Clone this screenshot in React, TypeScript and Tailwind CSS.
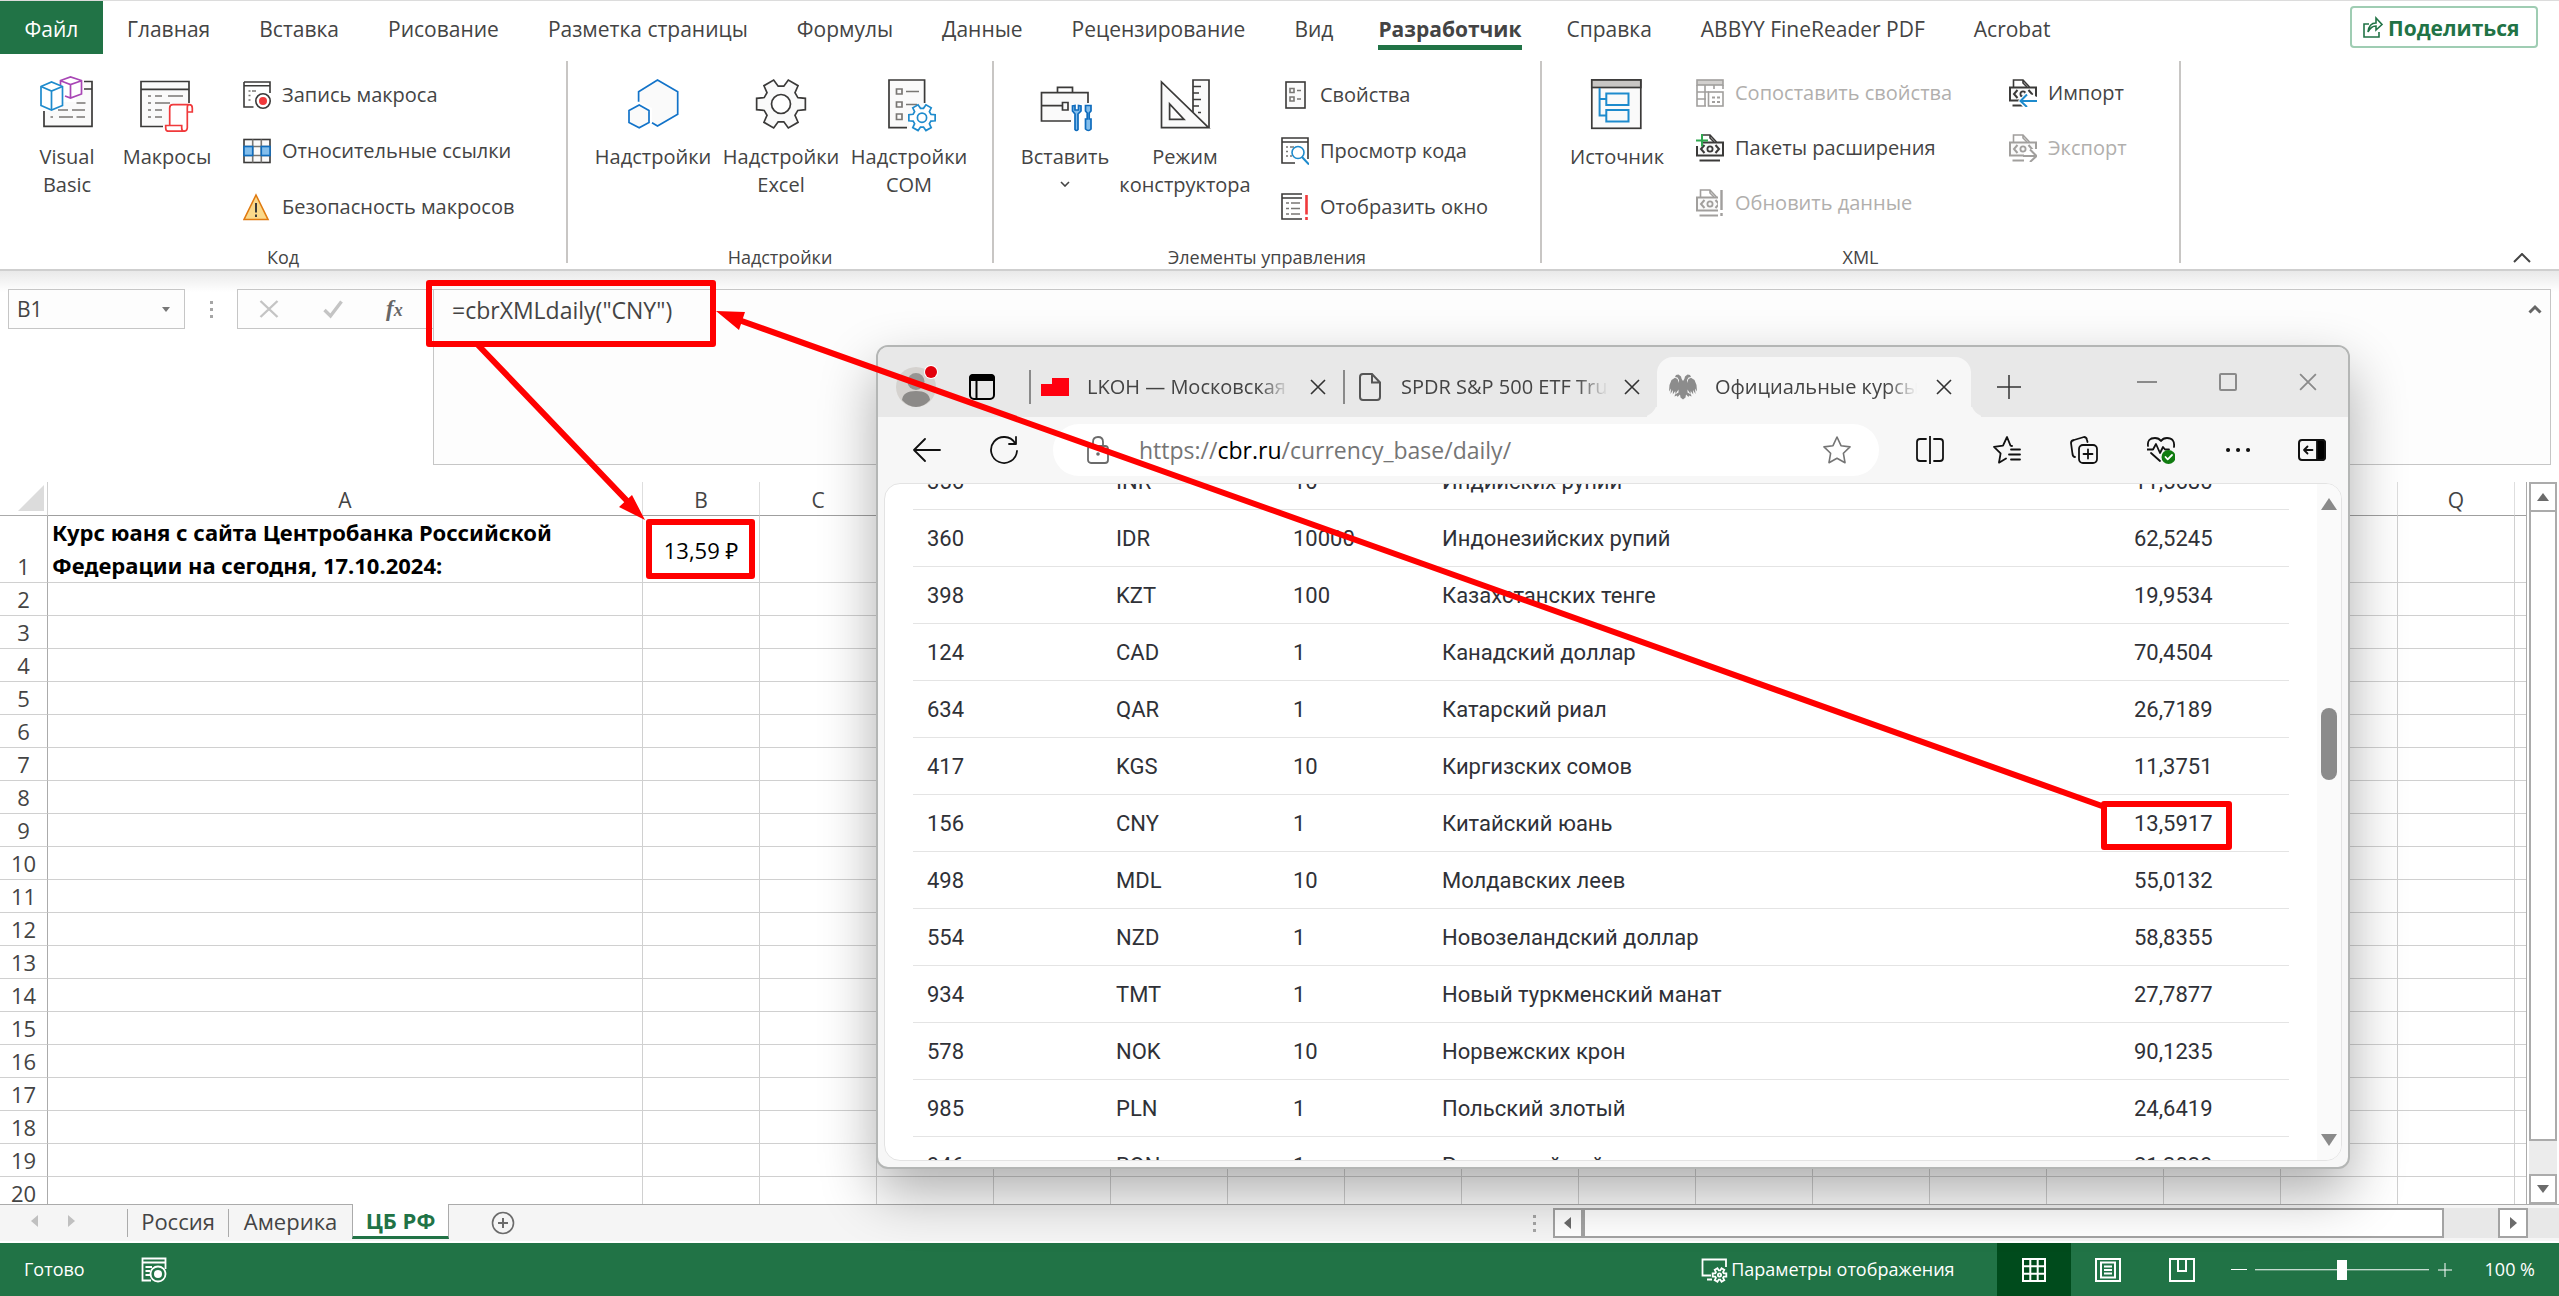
import React from "react";

const DARK = "#3b3a39";
const FILL = "#fafafa";

/* ---------- icon helpers ---------- */

function gearPath(cx: number, cy: number, outer: number, inner: number) {
  const pts: string[] = [];
  for (let i = 0; i < 6; i++) {
    const base = i * 60;
    const corners: [number, number][] = [
      [base - 21, inner],
      [base - 13, outer],
      [base + 13, outer],
      [base + 21, inner],
    ];
    for (const [deg, r] of corners) {
      const a = (deg * Math.PI) / 180;
      pts.push(`${(cx + r * Math.cos(a)).toFixed(2)} ${(cy + r * Math.sin(a)).toFixed(2)}`);
    }
  }
  return `M${pts.join("L")}Z`;
}

function Big({ children }: { children: React.ReactNode }) {
  return (
    <svg viewBox="0 0 54 56" className="w-[54px] h-14 shrink-0" fill="none" strokeWidth="1.7" aria-hidden="true">
      {children}
    </svg>
  );
}

function Small({ children }: { children: React.ReactNode }) {
  return (
    <svg viewBox="0 0 28 28" className="size-7 shrink-0" fill="none" strokeWidth="1.6" aria-hidden="true">
      {children}
    </svg>
  );
}

const VisualBasicIcon = () => (
  <Big>
    <path d="M4 35V50.3H52V5.5H36V26H22V35Z" fill={FILL} />
    <path d="M44 5.5H52V50.3H4V35M44 13H52" stroke={DARK} />
    <path d="M36.5 27H45.5M18 34H28M32 34H45M10.5 41H13M19 41H33M36.5 41H45" stroke="#797774" />
    <path d="M20 4.5L30.5 1L41.5 4.5V18L30.5 22L25 20V9Z" fill="#fff" />
    <path d="M20.5 9V4.5L30.5 1L41.5 4.5V18L30.5 22L25 20M20.5 4.8L30.5 8.6L41.5 4.8M30.5 8.6V22" stroke="#a846b5" />
    <path d="M1 10.5L11.5 6L22.5 10.5V29.5L11.5 34L1 29.5Z" fill="#fff" stroke="#1e8bcd" />
    <path d="M1 10.5L11.5 15L22.5 10.5M11.5 15V34" stroke="#1e8bcd" />
  </Big>
);

const MacrosIcon = () => (
  <Big>
    <path d="M1 5.5H49V27L29 29V48L23 50.5H1Z" fill={FILL} />
    <path d="M49 27V5.5H1V50.5H23M1 13.3H49" stroke={DARK} />
    <path d="M8 20H11M15 20H22M28 20H43M8 27H11M15 27H30M8 34H11M15 34H22M8 41H11M15 41H22" stroke="#797774" />
    <path
      d="M29.7 49.5V32Q29.7 28.7 33 28.7H49Q52.3 28.7 52.3 32V36H47.3V52Q47 55.2 44 55.2H28Q25.7 55.2 25.7 52V49.5H41.7V52Q41.7 55.2 44 55.2M47.3 36V32Q47.3 28.7 49 28.7"
      fill="#fff"
      stroke="#f0393b"
    />
  </Big>
);

const RecordIcon = () => (
  <Small>
    <path d="M1 1H27V12M1 1V26H10.5M1 4.8H27" stroke={DARK} />
    <path d="M5.5 10H7.5M9 10H13M5.5 14.5H7.5M5.5 19H7.5" stroke="#797774" />
    <circle cx="20" cy="20" r="7.2" stroke={DARK} fill="#fff" />
    <circle cx="20" cy="20" r="4" fill="#f0393b" />
  </Small>
);

const RelativeIcon = () => (
  <Small>
    <rect x="1" y="2.5" width="26" height="23" fill={FILL} stroke={DARK} />
    <path d="M9.7 2.5V25.5M18.3 2.5V25.5M1 9.5H27M1 18.5H27" stroke="#797774" />
    <rect x="1" y="9.5" width="8.7" height="9" fill="#83beec" stroke="#0f6cbd" />
    <rect x="18.3" y="9.5" width="8.7" height="9" fill="#83beec" stroke="#0f6cbd" />
  </Small>
);

const WarningIcon = () => (
  <Small>
    <path d="M13 2L25 26.5H1Z" fill="#fbd98a" stroke="#e07a10" />
    <path d="M13 10V19.5M13 21.5V24" stroke={DARK} strokeWidth="2" />
  </Small>
);

const AddinsIcon = () => (
  <Big>
    <path d="M12.6 26V15.7L31.5 4L51.7 15.7V38.3L31.5 50L26 46.7V32Z" fill={FILL} />
    <path d="M12.6 25.7V15.7L31.5 4L51.7 15.7V38.3L31.5 50L26 46.7" stroke="#1273c9" />
    <path d="M13.2 29L23 34.5V46.5L13.2 51.8L3 46.5V34.5Z" fill={FILL} stroke="#1273c9" />
  </Big>
);

const GearIcon = () => (
  <Big>
    <path d={gearPath(27, 28, 25, 18)} fill={FILL} stroke={DARK} />
    <circle cx="27" cy="28" r="9.5" fill="#fff" stroke={DARK} />
  </Big>
);

const ComIcon = () => (
  <Big>
    <path d="M7 4H42.6V30L27 42V51.7H7Z" fill={FILL} />
    <path d="M42.6 27V4H7V51.7H25" stroke={DARK} />
    <path d="M14.5 13H20V18H14.5ZM14.5 26H20V31H14.5ZM14.5 38H20V43.5H14.5ZM24 15.5H37M24 28.5H35" stroke="#797774" />
    <path d={gearPath(40, 41.7, 13.5, 9.5)} fill="#fff" stroke="#1e8bcd" />
    <circle cx="40" cy="41.7" r="4.6" stroke="#1e8bcd" />
  </Big>
);

const ToolboxIcon = () => (
  <Big>
    <path d="M3.5 16.7H50V28H34V45H3.5Z" fill={FILL} />
    <path d="M50 27V16.7H3.5V45H33M3.5 29.7H24M19.5 16.7V11.3H34.5V16.7M24.5 26.5H30V34H24.5Z" stroke={DARK} />
    <path d="M34.5 30V35L37 38V53.5Q38.4 55.5 40 53.5V38L43 35V30L40.5 29.5V34H37V29.5Z" fill="#83beec" stroke="#0f6cbd" />
    <path d="M47.5 29.5H53V35L51.2 37V43H53V53Q50.5 56 47.5 53V43H49.2V37L47.5 35Z" fill="#83beec" stroke="#0f6cbd" />
  </Big>
);

const DesignIcon = () => (
  <Big>
    <path d="M35 36V4H51V51.7" fill={FILL} stroke={DARK} />
    <path d="M35 10.5H43M35 17H41M35 23.5H43M35 30H41M40 36.5H43" stroke={DARK} />
    <path d="M3.5 6V51.7H50.6Z" fill={FILL} stroke={DARK} />
    <path d="M11.6 28V43.3H26Z" fill="#fff" stroke={DARK} />
  </Big>
);

const PropertiesIcon = () => (
  <Small>
    <rect x="5" y="1" width="19" height="26" fill={FILL} stroke={DARK} />
    <path d="M9 7.5H13V11.5H9ZM9 16H13V20H9ZM16 9.5H20M16 18H20" stroke="#797774" />
  </Small>
);

const ViewCodeIcon = () => (
  <Small>
    <path d="M27 22V1H1V26H14M1 5H27" stroke={DARK} />
    <path d="M5 10H7M9 10H13M5 14.5H7M5 19H7M9 19H11" stroke="#797774" />
    <circle cx="17" cy="15.5" r="6" fill="#fff" stroke="#1e8bcd" />
    <path d="M21 20L28 27.5" stroke="#1e8bcd" strokeWidth="2" />
  </Small>
);

const ShowWindowIcon = () => (
  <Small>
    <path d="M21 1H1V26H21M1 5H21" stroke={DARK} />
    <path d="M5 10H8M10 10H19M5 15.5H8M10 15.5H19M5 21H8M10 21H19" stroke="#797774" />
    <path d="M25.5 2V21.5M25.5 24V27" stroke="#f0393b" strokeWidth="2.6" />
  </Small>
);

const SourceIcon = () => (
  <Big>
    <rect x="1.8" y="4" width="49" height="48.3" fill={FILL} stroke={DARK} />
    <rect x="1.8" y="4" width="49" height="7.5" fill="#c8c6c4" stroke={DARK} />
    <path d="M9.6 12V39.5H16M9.6 23H16M16.3 17.5H38.5V29H16.3ZM16.3 34H38.5V45.5H16.3Z" stroke="#1e8bcd" strokeWidth="2" />
  </Big>
);

const MapPropsIcon = () => (
  <Small>
    <rect x="1" y="1" width="26" height="5" fill="#d2d0ce" stroke="#a19f9d" />
    <path d="M1 6V27H10M9 6V27M18 6V10M27 6V10M1 13H13M1 20H10" stroke="#a19f9d" />
    <rect x="12.5" y="13" width="14.5" height="14" fill="#fff" stroke="#a19f9d" />
    <path d="M16 18.5H19M21 18.5H24M16 23H19M21 23H24" stroke="#a19f9d" strokeWidth="2.2" />
  </Small>
);

function XmlDoc({ color, kind }: { color: string; kind: "add" | "refresh" | "import" | "export" }) {
  return (
    <Small>
      <path d="M4.5 8V1H14L20.5 8M14 1V4L18 8" stroke={color} />
      <path d="M1 8.5H27V21.5H1Z" fill={FILL} stroke={color} strokeWidth="2" />
      <path d="M8.5 11L5 15L8.5 19M19.5 11L23 15L19.5 19" stroke={color} strokeWidth="2" />
      <circle cx="14" cy="15" r="2.6" stroke={color} strokeWidth="1.8" />
      <path d="M3.5 26.5H24" stroke={color} strokeWidth="2" />
      {kind === "add" && (
        <>
          <path d="M0 0H5V12H0Z" fill="#fff" />
          <path d="M0 6.5H12M6 0V12.5" stroke="#2fa84f" strokeWidth="2" />
        </>
      )}
      {kind === "refresh" && (
        <>
          <path d="M22 0H28V28H22Z" fill="#fff" />
          <path d="M25.5 1V21M25.5 24V27" stroke={color} strokeWidth="2.4" />
        </>
      )}
      {kind === "import" && (
        <>
          <path d="M9 22L17 13L28 18V28H14Z" fill="#fff" />
          <path d="M28 22H12M18 15.5L11.5 22L18 28" stroke="#1e8bcd" strokeWidth="2" />
        </>
      )}
      {kind === "export" && (
        <>
          <path d="M15 19L20 15H28V28H15Z" fill="#fff" />
          <path d="M14 22H27M21 15.5L27.5 22L21 28" stroke={color} strokeWidth="2" />
        </>
      )}
    </Small>
  );
}

/* ---------- ribbon ---------- */

const tabs = [
  "Главная", "Вставка", "Рисование", "Разметка страницы", "Формулы", "Данные", "Рецензирование",
  "Вид", "Разработчик", "Справка", "ABBYY FineReader PDF", "Acrobat",
];

function RibbonTabs() {
  return (
    <nav className="flex h-[54px] items-stretch border-t border-[#dcdcdc] text-[21px] text-[#444]">
      <button className="w-[103px] bg-[#217346] pt-1 text-white">Файл</button>
      <div className="flex gap-px">
        {tabs.map((t) =>
          t === "Разработчик" ? (
            <button key={t} className="relative mx-5 pt-1 font-bold">
              {t}
              <span className="absolute inset-x-0 bottom-1 h-[5px] bg-[#217346]" />
            </button>
          ) : (
            <button key={t} className="px-6 pt-1">{t}</button>
          ),
        )}
      </div>
      <button className="mt-[5px] mr-[21px] ml-auto flex h-[42px] w-[188px] items-center gap-1 rounded border-2 border-[#9fcdb3] pt-1 pl-2.5 font-bold text-[#217346]">
        <svg viewBox="0 0 22 24" className="mb-1 h-6 w-[22px]" fill="none" stroke="#217346" strokeWidth="1.6" aria-hidden="true">
          <path d="M7 9H2V22H17V17" />
          <path d="M6 17Q7 8 14 8V3L20 9.5L14 15V11Q9 11 6 17Z" />
        </svg>
        Поделиться
      </button>
    </nav>
  );
}

function LargeButton({ icon, lines, className, arrow }: { icon: React.ReactNode; lines: string[]; className: string; arrow?: boolean }) {
  return (
    <button className={`flex shrink-0 flex-col items-center pt-[15px] ${className}`}>
      {icon}
      <span className="mt-[11px] flex flex-col items-center leading-7 whitespace-nowrap">
        {lines.map((l) => <span key={l}>{l}</span>)}
        {arrow && (
          <svg viewBox="0 0 10 6" className="mt-2.5 h-1.5 w-2.5" fill="none" stroke="#444" strokeWidth="1.6" aria-hidden="true">
            <path d="M1 1L5 5L9 1" />
          </svg>
        )}
      </span>
    </button>
  );
}

function SmallButton({ icon, label, disabled, className }: { icon: React.ReactNode; label: string; disabled?: boolean; className: string }) {
  return (
    <button disabled={disabled} className={`flex items-center gap-[11px] whitespace-nowrap disabled:text-[#b1afad] ${className}`}>
      {icon}
      {label}
    </button>
  );
}

function Group({ label, className, children }: { label: string; className: string; children: React.ReactNode }) {
  return (
    <section className={`flex shrink-0 items-start ${className}`}>
      <div className="flex min-w-0 flex-1 flex-col">
        <div className="flex h-[184px] items-start">{children}</div>
        <h2 className="text-center text-[18px] leading-6">{label}</h2>
      </div>
      <div className="h-[202px] w-0.5 bg-[#c8c6c4]" />
    </section>
  );
}

function Ribbon() {
  return (
    <div className="flex border-b-2 border-[#cfcfcf] pt-[7px] text-[20px] text-[#444]">
      <Group label="Код" className="w-[568px]">
        <LargeButton icon={<VisualBasicIcon />} lines={["Visual", "Basic"]} className="ml-[19px] w-24" />
        <LargeButton icon={<MacrosIcon />} lines={["Макросы"]} className="w-[104px]" />
        <div className="ml-6 flex flex-col pt-1.5">
          <SmallButton className="h-14" icon={<RecordIcon />} label="Запись макроса" />
          <SmallButton className="h-14" icon={<RelativeIcon />} label="Относительные ссылки" />
          <SmallButton className="h-14" icon={<WarningIcon />} label="Безопасность макросов" />
        </div>
      </Group>
      <Group label="Надстройки" className="w-[426px]">
        <LargeButton icon={<AddinsIcon />} lines={["Надстройки"]} className="ml-[21px] w-32" />
        <LargeButton icon={<GearIcon />} lines={["Надстройки", "Excel"]} className="w-32" />
        <LargeButton icon={<ComIcon />} lines={["Надстройки", "COM"]} className="w-32" />
      </Group>
      <Group label="Элементы управления" className="w-[548px]">
        <LargeButton icon={<ToolboxIcon />} lines={["Вставить"]} arrow className="ml-[15px] w-28" />
        <LargeButton icon={<DesignIcon />} lines={["Режим", "конструктора"]} className="w-32" />
        <div className="ml-8 flex flex-col pt-1.5">
          <SmallButton className="h-14" icon={<PropertiesIcon />} label="Свойства" />
          <SmallButton className="h-14" icon={<ViewCodeIcon />} label="Просмотр кода" />
          <SmallButton className="h-14" icon={<ShowWindowIcon />} label="Отобразить окно" />
        </div>
      </Group>
      <Group label="XML" className="w-[639px]">
        <LargeButton icon={<SourceIcon />} lines={["Источник"]} className="ml-[19px] w-28" />
        <div className="ml-[23px] flex w-[313px] flex-col items-start pt-1">
          <SmallButton className="h-[55px]" disabled icon={<MapPropsIcon />} label="Сопоставить свойства" />
          <SmallButton className="h-[55px]" icon={<XmlDoc color={DARK} kind="add" />} label="Пакеты расширения" />
          <SmallButton className="h-[55px]" disabled icon={<XmlDoc color="#a19f9d" kind="refresh" />} label="Обновить данные" />
        </div>
        <div className="flex flex-col pt-1">
          <SmallButton className="h-[55px]" icon={<XmlDoc color={DARK} kind="import" />} label="Импорт" />
          <SmallButton className="h-[55px]" disabled icon={<XmlDoc color="#a19f9d" kind="export" />} label="Экспорт" />
        </div>
      </Group>
      <button aria-label="Свернуть ленту" className="mr-7 mb-1.5 ml-auto self-end">
        <svg viewBox="0 0 18 10" className="h-2.5 w-[18px]" fill="none" stroke="#444" strokeWidth="2" aria-hidden="true">
          <path d="M1 9L9 1L17 9" />
        </svg>
      </button>
    </div>
  );
}

/* ---------- formula bar ---------- */

function Dots() {
  return (
    <div className="flex flex-col gap-1">
      <span className="size-[3px] bg-[#a6a6a6]" />
      <span className="size-[3px] bg-[#a6a6a6]" />
      <span className="size-[3px] bg-[#a6a6a6]" />
    </div>
  );
}

function FormulaBar() {
  return (
    <div className="flex items-start bg-linear-to-b from-[#e9e9e9] to-white to-10% px-2 pt-[18px] pb-[17px] text-[#444]">
      <div className="flex h-10 w-[177px] items-center border border-[#c6c6c6] bg-[#fdfdfd] pr-3.5 pl-2">
        <input aria-label="Имя" defaultValue="B1" className="min-w-0 flex-1 pt-0.5 text-[21px] outline-none" />
        <svg viewBox="0 0 8 5" className="h-[5px] w-2" aria-hidden="true"><path d="M0 0H8L4 5Z" fill="#777" /></svg>
      </div>
      <div className="flex h-10 w-[52px] items-center justify-center"><Dots /></div>
      <div className="flex h-10 w-[196px] items-center border border-r-0 border-[#c6c6c6] bg-[#fdfdfd] pl-[21px]">
        <button aria-label="Отмена" className="mr-[44px]">
          <svg viewBox="0 0 20 20" className="size-5" stroke="#c4c4c4" strokeWidth="2.4" aria-hidden="true"><path d="M1.5 2L18.5 18M18.5 2L1.5 18" /></svg>
        </button>
        <button aria-label="Ввод" className="mr-[43px]">
          <svg viewBox="0 0 20 20" className="size-5" fill="none" stroke="#c4c4c4" strokeWidth="3.4" aria-hidden="true"><path d="M1.5 11L7.5 17L18.5 2.5" /></svg>
        </button>
        <button aria-label="Вставить функцию" className="font-[Liberation_Serif,serif] text-[23px] font-bold text-[#666] italic">
          f<span className="text-[18px]">x</span>
        </button>
      </div>
      <div className="flex h-[176px] flex-1 items-start border border-[#c6c6c6] bg-[#fdfdfd]">
        <textarea aria-label="Строка формул" defaultValue={'=cbrXMLdaily("CNY")'} className="h-full flex-1 resize-none pt-1 pl-[18px] text-[23px] leading-8 outline-none" />
        <button aria-label="Свернуть строку формул" className="mt-3.5 mr-2">
          <svg viewBox="0 0 14 10" className="h-2.5 w-3.5" fill="none" stroke="#666" strokeWidth="3" aria-hidden="true"><path d="M1.5 8.5L7 3L12.5 8.5" /></svg>
        </button>
      </div>
    </div>
  );
}

/* ---------- sheet ---------- */

const narrow = "CDEFGHIJKLMNOPQ".split("");
const rowNumbers = Array.from({ length: 19 }, (_, i) => i + 2);

function Arrow({ d }: { d: string }) {
  return (
    <svg viewBox="0 0 16 16" className="size-4" fill="#6b6b6b" aria-hidden="true"><path d={d} /></svg>
  );
}

function Sheet() {
  const cell = "border-r border-b border-[#d0d0d0]";
  return (
    <div className="flex min-h-0 flex-1 overflow-hidden">
      <div className="min-w-0 flex-1 overflow-hidden border-r border-[#ababab]">
        <table className="w-full table-fixed border-separate border-spacing-0 text-[#444]">
          <colgroup>
            <col className="w-12" />
            <col className="w-[595px]" />
            <col className="w-[117px]" />
            {narrow.map((c) => <col key={c} className="w-[117px]" />)}
            <col />
          </colgroup>
          <thead>
            <tr className="h-[34px] text-[21px] leading-6">
              <th className="border-r border-b border-r-[#d0d0d0] border-b-[#ababab] p-0 align-bottom">
                <svg viewBox="0 0 26 26" className="mr-[3px] mb-1 ml-auto size-[26px]" fill="#dcdcdc" aria-hidden="true"><path d="M26 0V26H0Z" /></svg>
              </th>
              {["A", "B", ...narrow].map((c) => (
                <th key={c} className="border-r border-b border-r-[#dedede] border-b-[#9f9f9f] p-0 pt-0.5 font-normal">{c}</th>
              ))}
              <th className="border-b border-[#9f9f9f] p-0" />
            </tr>
          </thead>
          <tbody>
            <tr className="h-[67px]">
              <th className="border-r border-b border-r-[#ababab] border-b-[#d0d0d0] p-0 align-bottom text-[22px] leading-8 font-normal">1</th>
              <td className={`${cell} py-0 pr-0 pl-1 font-[Noto_Sans,sans-serif] text-[22px] leading-[33px] font-bold text-black`}>
                Курс юаня с сайта Центробанка Российской<br />Федерации на сегодня, 17.10.2024:
              </td>
              <td className={`${cell} p-0 pt-0.5 text-center text-[22px] text-black`}>13,59 ₽</td>
              {narrow.map((c) => <td key={c} className={cell} />)}
              <td className="border-b border-[#d0d0d0]" />
            </tr>
            {rowNumbers.map((n) => (
              <tr key={n} className="h-[33px]">
                <th className="border-r border-b border-r-[#ababab] border-b-[#d0d0d0] p-0 text-[22px] leading-8 font-normal">{n}</th>
                <td className={cell} />
                <td className={cell} />
                {narrow.map((c) => <td key={c} className={cell} />)}
                <td className="border-b border-[#d0d0d0]" />
              </tr>
            ))}
          </tbody>
        </table>
      </div>
      <div className="flex w-8 flex-col bg-white pr-0.5 pl-0.5">
        <button aria-label="Вверх" className="flex h-[30px] items-center justify-center border-2 border-[#ababab] bg-white"><Arrow d="M8 4L14 12H2Z" /></button>
        <div className="flex flex-1 flex-col bg-[#ececec]">
          <div className="mb-[33px] flex-1 border-2 border-t-0 border-[#ababab] bg-white" />
        </div>
        <button aria-label="Вниз" className="flex h-[30px] items-center justify-center border-2 border-[#ababab] bg-white"><Arrow d="M8 12L14 4H2Z" /></button>
      </div>
    </div>
  );
}

function SheetTabs() {
  return (
    <div className="flex h-[39px] items-stretch border-t border-b-2 border-t-[#ababab] border-b-white bg-[#f5f5f5] text-[22px] text-[#444]">
      <div className="flex w-[127px] items-center gap-[30px] pb-1 pl-[30px]">
        <svg viewBox="0 0 8 12" className="h-3 w-2" fill="#c0c0c0" aria-hidden="true"><path d="M8 0V12L1 6Z" /></svg>
        <svg viewBox="0 0 8 12" className="h-3 w-2" fill="#c0c0c0" aria-hidden="true"><path d="M0 0V12L7 6Z" /></svg>
      </div>
      <button className="my-1 flex w-[101px] items-center justify-center border-l border-[#ababab] pb-1 leading-6">Россия</button>
      <button className="my-1 flex w-[124px] items-center justify-center border-l border-[#ababab] pb-1 leading-6">Америка</button>
      <button className="-mt-px mb-0.5 flex w-[97px] items-center justify-center border-x border-b-[3px] border-x-[#ababab] border-b-[#217346] bg-white leading-6 font-bold text-[#217346]">ЦБ РФ</button>
      <button aria-label="Новый лист" className="ml-[42px]">
        <svg viewBox="0 0 24 24" className="size-6" fill="none" stroke="#6b6b6b" strokeWidth="1.6" aria-hidden="true">
          <circle cx="12" cy="12" r="10.5" /><path d="M12 7V17M7 12H17" strokeWidth="2" />
        </svg>
      </button>
      <div className="ml-auto flex w-[1026px] items-center">
        <Dots />
        <div className="ml-[17px] flex h-[30px] flex-1 bg-[#e8e8e8]">
          <button aria-label="Влево" className="flex w-[30px] items-center justify-center border-2 border-[#a3a3a3] bg-white"><Arrow d="M4 8L11 2V14Z" /></button>
          <div className="mr-[54px] flex-1 border-2 border-[#a3a3a3] bg-white" />
          <button aria-label="Вправо" className="mr-[31px] flex w-[30px] items-center justify-center border-2 border-[#a3a3a3] bg-white"><Arrow d="M12 8L5 2V14Z" /></button>
        </div>
      </div>
    </div>
  );
}

/* ---------- status bar ---------- */

function StatusBar() {
  return (
    <footer className="flex h-[53px] items-center bg-[#217346] text-[18px] text-white">
      <span className="ml-6">Готово</span>
      <button aria-label="Запись макроса" className="ml-14">
        <svg viewBox="0 0 26 26" className="size-[26px]" fill="none" stroke="#fff" strokeWidth="1.8" aria-hidden="true">
          <path d="M24.5 12V1.5H1.5V23.5H10M1.5 5.5H24.5M4.5 10H11M4.5 14H9M4.5 18H9" />
          <circle cx="17" cy="17" r="7.5" /><circle cx="17" cy="17" r="4" fill="#fff" stroke="none" />
        </svg>
      </button>
      <button className="ml-auto flex items-center gap-0.5">
        <svg viewBox="0 0 28 26" className="h-[26px] w-7" fill="none" stroke="#fff" strokeWidth="1.8" aria-hidden="true">
          <path d="M25 10V2.5H1.5V18.5H10M6 22.5H11" />
          <path d={gearPath(18.5, 18, 7, 4.6)} /><circle cx="18.5" cy="18" r="1.6" />
        </svg>
        Параметры отображения
      </button>
      <div className="ml-[42px] flex self-stretch">
        <button aria-label="Обычный" className="flex w-[74px] items-center justify-center bg-[#004b1c]">
          <svg viewBox="0 0 24 24" className="size-6" fill="none" stroke="#fff" strokeWidth="2" aria-hidden="true">
            <path d="M1 1H23V23H1ZM8.3 1V23M15.7 1V23M1 8.3H23M1 15.7H23" />
          </svg>
        </button>
        <button aria-label="Разметка страницы" className="flex w-[74px] items-center justify-center">
          <svg viewBox="0 0 26 24" className="h-6 w-[26px]" fill="none" stroke="#fff" strokeWidth="2" aria-hidden="true">
            <path d="M1 1H25V23H1ZM6 4.5H20V19.5H6ZM9 8.5H17M9 12H17M9 15.5H17" />
          </svg>
        </button>
        <button aria-label="Страничный режим" className="flex w-[74px] items-center justify-center">
          <svg viewBox="0 0 26 24" className="h-6 w-[26px]" fill="none" stroke="#fff" strokeWidth="2" aria-hidden="true">
            <path d="M1 1H25V23H1ZM9 1V14M9 13H17M17 1V14" />
          </svg>
        </button>
      </div>
      <button aria-label="Уменьшить" className="ml-3 flex h-4 w-4 items-center">
        <span className="block h-px w-full bg-white" />
      </button>
      <input
        type="range"
        aria-label="Масштаб"
        min={0}
        max={200}
        defaultValue={100}
        className="mx-2 h-5 w-[174px] appearance-none bg-linear-to-b from-transparent from-45% via-white via-45% to-transparent to-55% [&::-webkit-slider-thumb]:h-5 [&::-webkit-slider-thumb]:w-2.5 [&::-webkit-slider-thumb]:appearance-none [&::-webkit-slider-thumb]:bg-white"
      />
      <button aria-label="Увеличить">
        <svg viewBox="0 0 16 16" className="size-4" stroke="#fff" aria-hidden="true"><path d="M8 1V15M1 8H15" /></svg>
      </button>
      <span className="mr-6 ml-8">100 %</span>
    </footer>
  );
}

/* ---------- browser window ---------- */

const rates = [
  ["356", "INR", "10", "Индийских рупий", "11,5680"],
  ["360", "IDR", "10000", "Индонезийских рупий", "62,5245"],
  ["398", "KZT", "100", "Казахстанских тенге", "19,9534"],
  ["124", "CAD", "1", "Канадский доллар", "70,4504"],
  ["634", "QAR", "1", "Катарский риал", "26,7189"],
  ["417", "KGS", "10", "Киргизских сомов", "11,3751"],
  ["156", "CNY", "1", "Китайский юань", "13,5917"],
  ["498", "MDL", "10", "Молдавских леев", "55,0132"],
  ["554", "NZD", "1", "Новозеландский доллар", "58,8355"],
  ["934", "TMT", "1", "Новый туркменский манат", "27,7877"],
  ["578", "NOK", "10", "Норвежских крон", "90,1235"],
  ["985", "PLN", "1", "Польский злотый", "24,6419"],
  ["946", "RON", "1", "Румынский лей", "21,3039"],
];

function Cross({ className, color }: { className: string; color: string }) {
  return (
    <svg viewBox="0 0 16 16" className={className} stroke={color} strokeWidth="1.6" aria-hidden="true">
      <path d="M1 1L15 15M15 1L1 15" />
    </svg>
  );
}

function Eagle() {
  return (
    <svg viewBox="0 0 28 26" className="h-[26px] w-7 shrink-0" fill="#8c8c8c" aria-hidden="true">
      <path d="M14 7L12.7 5L12 2.500L9.500 0.500L7 1L6 3L8.500 3.500L10 6V9L8.500 5L6 3.800L2.500 6L0.500 11L0 17.500L2 14.500L1.500 20L4 16L3.800 20.500L6.200 17L6.500 20L9.500 15.500L9.500 18.500L6 20.500L5.500 22.500L8 21.500L8.500 23L11 20.500L11.500 23.500L14 25.500L16.500 23.500L17 20.500L19.500 23L20 21.500L22.500 22.500L22 20.500L18.500 18.500L18.500 15.500L21.500 20L21.800 17L24.200 20.500L24 16L26.500 20L26 14.500L28 17.500L27.500 11L25.500 6L22 3.800L19.500 5L18 9V6L19.500 3.500L22 3L21 1L18.500 0.500L16 2.500L15.300 5Z" />
    </svg>
  );
}

function Tool({ label, last, children }: { label: string; last?: boolean; children: React.ReactNode }) {
  return (
    <button aria-label={label} className={`flex shrink-0 justify-center ${last ? "w-[72px]" : "w-[77px]"}`}>
      <svg viewBox="0 0 28 28" className="size-7" fill="none" stroke="#111" strokeWidth="1.8" strokeLinejoin="round" strokeLinecap="round" aria-hidden="true">
        {children}
      </svg>
    </button>
  );
}

function BrowserTabs() {
  const fade = "min-w-0 flex-1 overflow-hidden text-left whitespace-nowrap mask-r-from-85%";
  return (
    <div className="flex h-[70px] items-stretch bg-[#e8e8e8] pt-2.5 text-[20px] text-[#444]">
      <button aria-label="Профиль" className="relative ml-[18px] self-center">
        <svg viewBox="0 0 40 40" className="size-10" aria-hidden="true">
          <circle cx="20" cy="20" r="20" fill="#d5d2cf" />
          <circle cx="20" cy="14.500" r="8.500" fill="#979593" />
          <path d="M6 33Q7 24 20 24Q33 24 34 33Q28 40 20 40Q12 40 6 33Z" fill="#8c8a88" />
        </svg>
        <span className="absolute -top-px -right-px size-3 rounded-full bg-[#e3000b] ring-1 ring-white" />
      </button>
      <button aria-label="Вкладки" className="ml-[33px] self-center">
        <svg viewBox="0 0 26 26" className="size-[26px]" fill="none" stroke="#000" strokeWidth="2" aria-hidden="true">
          <rect x="1" y="1" width="24" height="24" rx="4" /><path d="M1 4Q1 1 4 1H22Q25 1 25 4V6H1Z" fill="#000" /><path d="M7.500 6V25" />
        </svg>
      </button>
      <div className="ml-[34px] flex w-[314px] items-center">
        <span className="h-[34px] w-0.5 bg-[#8a8a8a]" />
        <svg viewBox="0 0 28 18" className="ml-2.5 h-[18px] w-7 shrink-0" fill="#ff000f" aria-hidden="true"><path d="M0 6H11V0H28V18H0Z" /></svg>
        <button className={`ml-[18px] ${fade}`}>LKOH — Московская</button>
        <button aria-label="Закрыть вкладку" className="mr-[17px] ml-5"><Cross className="size-4" color="#333" /></button>
      </div>
      <div className="flex w-[314px] items-center">
        <span className="h-[34px] w-0.5 bg-[#8a8a8a]" />
        <svg viewBox="0 0 22 28" className="ml-3.5 h-7 w-[22px] shrink-0" fill="none" stroke="#555" strokeWidth="2" aria-hidden="true">
          <path d="M4 1H13L21 9.500V24Q21 27 18 27H4Q1 27 1 24V4Q1 1 4 1ZM13 1V9.500H21" />
        </svg>
        <button className={`ml-5 ${fade}`}>SPDR S&amp;P 500 ETF Trust</button>
        <button aria-label="Закрыть вкладку" className="mr-[17px] ml-4"><Cross className="size-4" color="#333" /></button>
      </div>
      <div className="relative flex w-[314px] items-center rounded-t-2xl bg-[#f7f7f7]">
        <span className="absolute bottom-0 -left-4 size-4 rounded-br-2xl shadow-[6px_6px_0_#f7f7f7] [clip-path:inset(0)]" />
        <span className="absolute -right-4 bottom-0 size-4 rounded-bl-2xl shadow-[-6px_6px_0_#f7f7f7] [clip-path:inset(0)]" />
        <span className="ml-3"><Eagle /></span>
        <button className={`ml-[18px] ${fade}`}>Официальные курсы</button>
        <button aria-label="Закрыть вкладку" className="mr-[19px] ml-[19px]"><Cross className="size-4" color="#333" /></button>
      </div>
      <button aria-label="Новая вкладка" className="ml-[26px] self-center">
        <svg viewBox="0 0 24 24" className="size-6" stroke="#333" strokeWidth="1.500" aria-hidden="true"><path d="M12 0V24M0 12H24" /></svg>
      </button>
      <div className="mr-[31px] mb-2.5 ml-auto flex items-center gap-[62px]">
        <button aria-label="Свернуть" className="flex h-5 w-5 items-center"><span className="h-0.5 w-full bg-[#8a8a8a]" /></button>
        <button aria-label="Развернуть" className="size-[18px] rounded-xs border-2 border-[#8a8a8a]" />
        <button aria-label="Закрыть"><Cross className="size-[18px]" color="#8a8a8a" /></button>
      </div>
    </div>
  );
}

function BrowserToolbar() {
  return (
    <div className="flex h-[66px] items-center bg-[#f7f7f7]">
      <div className="flex w-[175px] pl-2.5">
        <Tool label="Назад"><path d="M27 14H1M12 3L1 14L12 25" /></Tool>
        <Tool label="Обновить"><path d="M25 7A13 13 0 1 0 27 15M26 1V8H19" /></Tool>
      </div>
      <div className="flex h-[52px] min-w-0 flex-1 items-center rounded-full bg-white pr-7 pl-[34px]">
        <svg viewBox="0 0 22 28" className="h-7 w-[22px]" fill="none" stroke="#6b6b6b" strokeWidth="1.800" aria-hidden="true">
          <rect x="1" y="10" width="20" height="17" rx="3" /><path d="M6 10V6Q6 1 11 1Q16 1 16 6V10" /><circle cx="11" cy="18" r="1.800" fill="#6b6b6b" stroke="none" />
        </svg>
        <div role="textbox" aria-label="Адрес" className="ml-[30px] text-[23px] text-[#757575]">
          https://<span className="text-black">cbr.ru</span>/currency_base/daily/
        </div>
        <button aria-label="В избранное" className="ml-auto">
          <svg viewBox="0 0 28 28" className="size-7" fill="none" stroke="#757575" strokeWidth="1.600" strokeLinejoin="round" aria-hidden="true">
            <path d="M14 1L18 9.700L27 10.900L20.400 17.300L22 26.700L14 22.200L6 26.700L7.600 17.300L1 10.900L10 9.700Z" />
          </svg>
        </button>
      </div>
      <div className="flex pl-3">
        <Tool label="Разделить экран"><path d="M10 3H4Q1 3 1 6V22Q1 25 4 25H10M14 0V28M18 3H24Q27 3 27 6V22Q27 25 24 25H18" /></Tool>
        <Tool label="Избранное"><path d="M19 10L17.500 9.700L14 1L10 9.700L1 10.900L7.600 17.300L6 26.700L13 22.500M18 13.500H27M16 18.500H27M18 23.500H27" /></Tool>
        <Tool label="Коллекции"><path d="M5 21Q3 21 2.500 18L1 7Q1 4.500 4 4L14 1Q16.500 1 17 4L17.500 6" /><rect x="9" y="9" width="18" height="18" rx="4" /><path d="M18 13.500V22.500M13.500 18H22.500" /></Tool>
        <Tool label="Производительность">
          <path d="M1 10Q0 2 8 2Q12 2 14 5Q16 2 20 2Q28 2 27 11M0 13.500H6L9 8L13 17L16 11L18 13.500H22M4 17L13 25" />
          <circle cx="21.500" cy="21" r="7" fill="#107c10" stroke="none" /><path d="M18.500 21L20.700 23.300L25 19" stroke="#fff" />
        </Tool>
        <Tool label="Ещё"><path d="M4 14H4.100M14 14H14.100M24 14H24.100" strokeWidth="4" /></Tool>
        <Tool label="Боковая панель" last><rect x="1" y="4" width="26" height="20" rx="3" strokeWidth="2" /><path d="M19 4H24Q27 4 27 7V21Q27 24 24 24H19Z" fill="#000" /><path d="M14.500 14H6M9.500 10.500L6 14L9.500 17.500" /></Tool>
      </div>
    </div>
  );
}

function BrowserWindow() {
  return (
    <div className="absolute top-[345px] left-[876px] flex w-[1474px] flex-col overflow-hidden rounded-xl border-2 border-[#b4b6b5] bg-[#f7f7f7] shadow-[0_24px_56px_rgba(0,0,0,0.32)]">
      <BrowserTabs />
      <BrowserToolbar />
      <div className="mx-1.5 mb-1.5 flex h-[678px] overflow-hidden rounded-2xl border border-[#e3e3e3] bg-white">
        <div className="flex min-w-0 flex-1 flex-col overflow-hidden pr-7 pl-7">
          <table className="-mt-[31px] w-full table-fixed border-separate border-spacing-0 font-[Roboto,sans-serif] text-[22px] text-[#2f3137]">
            <colgroup>
              <col className="w-[189px]" /><col className="w-[177px]" /><col className="w-[149px]" /><col /><col className="w-[169px]" />
            </colgroup>
            <tbody>
              {rates.map((r) => (
                <tr key={r[0]} className="h-[57px]">
                  {r.map((v, i) => <td key={i} className="border-b border-[#e4e4e4] py-0 pr-0 pl-3.5 whitespace-nowrap">{v}</td>)}
                </tr>
              ))}
            </tbody>
          </table>
        </div>
        <div className="flex w-6 flex-col items-center bg-[#fafafa] py-3.5">
          <svg viewBox="0 0 16 12" className="h-3 w-4" fill="#8a8a8a" aria-hidden="true"><path d="M8 0L16 12H0Z" /></svg>
          <div className="mt-[198px] h-[72px] w-4 rounded-full bg-[#8b8b8b]" />
          <svg viewBox="0 0 16 12" className="mt-auto h-3 w-4" fill="#8a8a8a" aria-hidden="true"><path d="M8 12L16 0H0Z" /></svg>
        </div>
      </div>
    </div>
  );
}

/* ---------- red call-outs ---------- */

function Annotations() {
  return (
    <svg className="pointer-events-none absolute inset-0 h-full w-full" fill="none" stroke="#ff0000" strokeWidth="6" strokeLinejoin="round" aria-hidden="true">
      <rect x="429" y="283" width="284" height="61" />
      <rect x="649" y="522" width="103" height="54" />
      <rect x="2104" y="804" width="125" height="43" />
      <path d="M478 345L631 505M2102 806L736 319" />
      <path d="M645 520L632 495L619 507ZM716 311L745 312L739 330Z" fill="#ff0000" stroke="none" />
    </svg>
  );
}

export default function App() {
  return (
    <main className="relative flex h-screen flex-col overflow-hidden bg-white font-[Open_Sans,Noto_Sans,sans-serif]">
      <RibbonTabs />
      <Ribbon />
      <FormulaBar />
      <Sheet />
      <SheetTabs />
      <StatusBar />
      <BrowserWindow />
      <Annotations />
    </main>
  );
}
